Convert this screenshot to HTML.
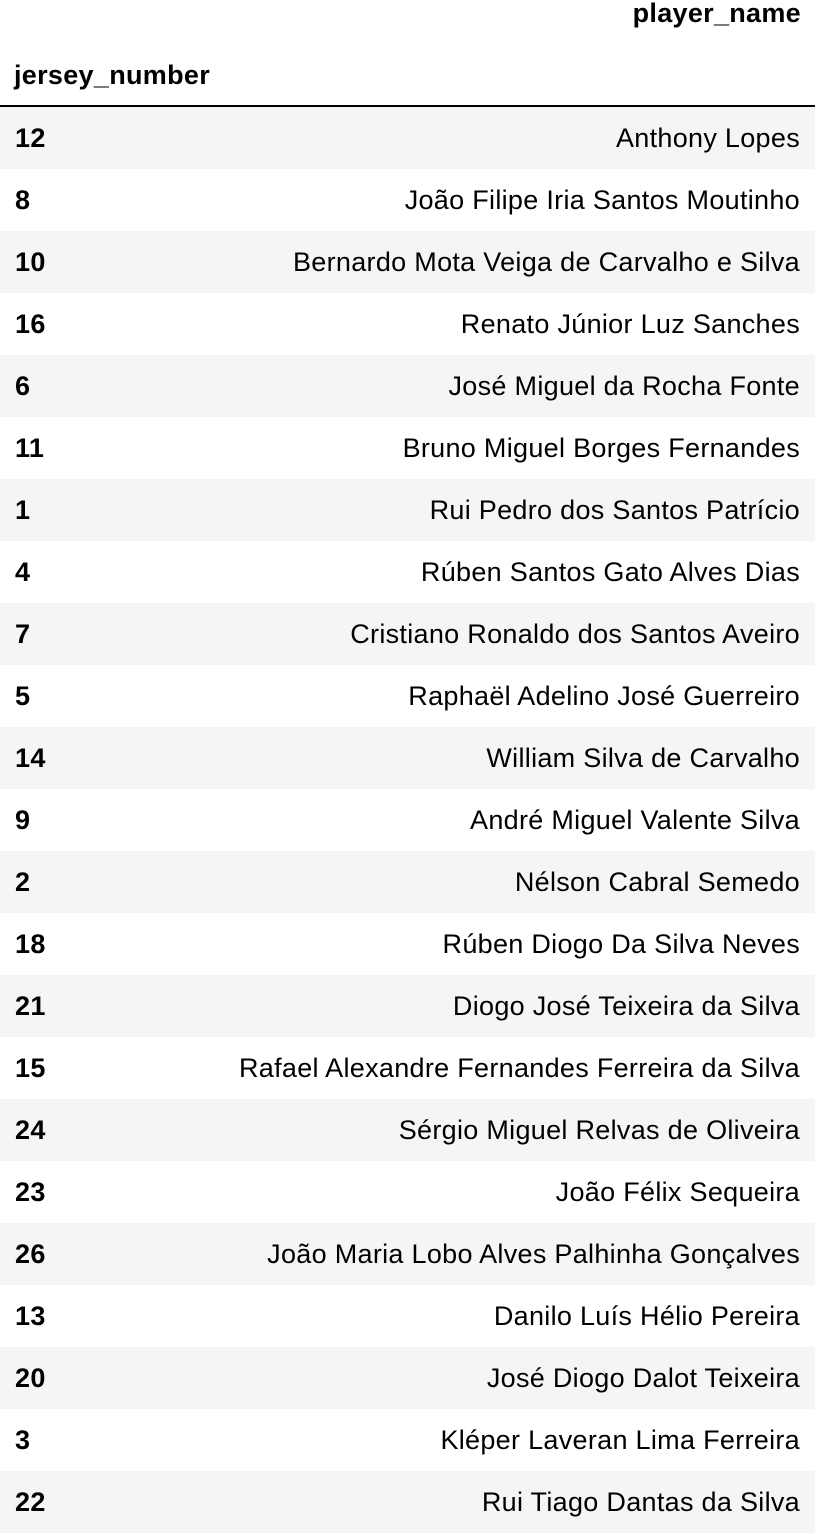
<!DOCTYPE html>
<html><head><meta charset="utf-8"><style>
body{margin:0;width:816px;height:1534px;background:#fff;font-family:"Liberation Sans",Arial,sans-serif;font-size:27px;letter-spacing:0.3px;color:#000;position:relative;overflow:hidden}
.h{position:absolute;font-weight:bold;line-height:30px}
.line{position:absolute;left:0;top:105px;width:815px;height:2px;background:#000}
.r{position:absolute;left:0;width:815px;height:62px;line-height:62px}
.r.s{background:#f5f5f5}
.r b{position:absolute;left:15px}
.r span{position:absolute;right:15px}
</style></head><body>
<div class="h" style="right:15px;top:-2px">player_name</div>
<div class="h" style="left:14px;top:60px">jersey_number</div>
<div class="line"></div>
<div class="r s" style="top:107px"><b>12</b><span>Anthony Lopes</span></div>
<div class="r" style="top:169px"><b>8</b><span>João Filipe Iria Santos Moutinho</span></div>
<div class="r s" style="top:231px"><b>10</b><span>Bernardo Mota Veiga de Carvalho e Silva</span></div>
<div class="r" style="top:293px"><b>16</b><span>Renato Júnior Luz Sanches</span></div>
<div class="r s" style="top:355px"><b>6</b><span>José Miguel da Rocha Fonte</span></div>
<div class="r" style="top:417px"><b>11</b><span>Bruno Miguel Borges Fernandes</span></div>
<div class="r s" style="top:479px"><b>1</b><span>Rui Pedro dos Santos Patrício</span></div>
<div class="r" style="top:541px"><b>4</b><span>Rúben Santos Gato Alves Dias</span></div>
<div class="r s" style="top:603px"><b>7</b><span>Cristiano Ronaldo dos Santos Aveiro</span></div>
<div class="r" style="top:665px"><b>5</b><span>Raphaël Adelino José Guerreiro</span></div>
<div class="r s" style="top:727px"><b>14</b><span>William Silva de Carvalho</span></div>
<div class="r" style="top:789px"><b>9</b><span>André Miguel Valente Silva</span></div>
<div class="r s" style="top:851px"><b>2</b><span>Nélson Cabral Semedo</span></div>
<div class="r" style="top:913px"><b>18</b><span>Rúben Diogo Da Silva Neves</span></div>
<div class="r s" style="top:975px"><b>21</b><span>Diogo José Teixeira da Silva</span></div>
<div class="r" style="top:1037px"><b>15</b><span>Rafael Alexandre Fernandes Ferreira da Silva</span></div>
<div class="r s" style="top:1099px"><b>24</b><span>Sérgio Miguel Relvas de Oliveira</span></div>
<div class="r" style="top:1161px"><b>23</b><span>João Félix Sequeira</span></div>
<div class="r s" style="top:1223px"><b>26</b><span>João Maria Lobo Alves Palhinha Gonçalves</span></div>
<div class="r" style="top:1285px"><b>13</b><span>Danilo Luís Hélio Pereira</span></div>
<div class="r s" style="top:1347px"><b>20</b><span>José Diogo Dalot Teixeira</span></div>
<div class="r" style="top:1409px"><b>3</b><span>Kléper Laveran Lima Ferreira</span></div>
<div class="r s" style="top:1471px"><b>22</b><span>Rui Tiago Dantas da Silva</span></div>
</body></html>
